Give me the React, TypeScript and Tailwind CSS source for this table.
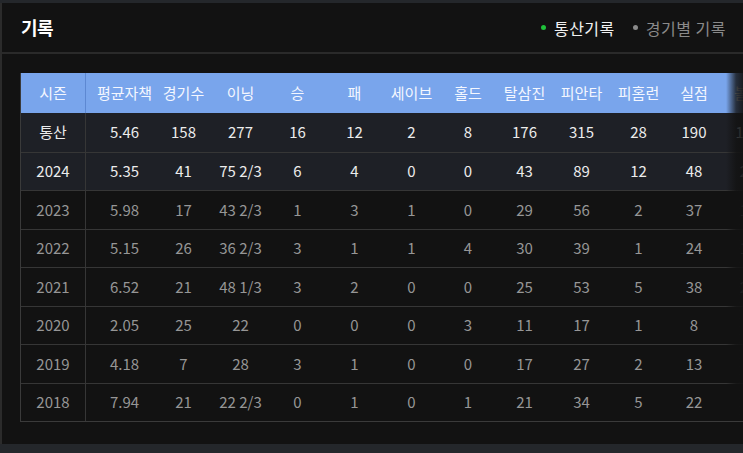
import React from 'react';

const columns = ['시즌', '평균자책', '경기수', '이닝', '승', '패', '세이브', '홀드', '탈삼진', '피안타', '피홈런', '실점', '볼넷'];

const colWidths = ['w-[65px]', 'w-[69px] pl-2', 'w-[57px]', 'w-[57px]', 'w-[57px]', 'w-[57px]', 'w-[57px]', 'w-[56px]', 'w-[57px]', 'w-[57px]', 'w-[57px]', 'w-[54px]', 'w-[54px]'];

const rows: { highlight: boolean; cells: string[] }[] = [
  { highlight: true, cells: ['통산', '5.46', '158', '277', '16', '12', '2', '8', '176', '315', '28', '190', '101'] },
  { highlight: true, cells: ['2024', '5.35', '41', '75 2/3', '6', '4', '0', '0', '43', '89', '12', '48', '25'] },
  { highlight: false, cells: ['2023', '5.98', '17', '43 2/3', '1', '3', '1', '0', '29', '56', '2', '37', '18'] },
  { highlight: false, cells: ['2022', '5.15', '26', '36 2/3', '3', '1', '1', '4', '30', '39', '1', '24', '16'] },
  { highlight: false, cells: ['2021', '6.52', '21', '48 1/3', '3', '2', '0', '0', '25', '53', '5', '38', '20'] },
  { highlight: false, cells: ['2020', '2.05', '25', '22', '0', '0', '0', '3', '11', '17', '1', '8', '7'] },
  { highlight: false, cells: ['2019', '4.18', '7', '28', '3', '1', '0', '0', '17', '27', '2', '13', '6'] },
  { highlight: false, cells: ['2018', '7.94', '21', '22 2/3', '0', '1', '0', '1', '21', '34', '5', '22', '9'] },
];

export default function App() {
  return (
    <div
      className="w-[743px] h-[453px] overflow-hidden bg-[#24272b] pt-[3px]"
      style={{ fontFamily: '"Noto Sans CJK KR", "Noto Sans", sans-serif' }}
    >
      <div className="w-[746px] h-[441px] bg-[#121212] border-l-2 border-[#2b2b2b] flex flex-col">
        {/* header */}
        <div className="h-[51px] shrink-0 flex items-center justify-between pl-[19px] pr-[20px] border-b-2 border-[#2a2a2a]">
          <h2 className="text-[18px] font-bold text-white tracking-tight">기록</h2>
          <div className="flex items-center gap-[18px] text-[16px] tracking-[0.5px]">
            <div className="flex items-center gap-[8px] text-[#f2f2f2]">
              <span className="w-[5px] h-[5px] rounded-full bg-[#1fc13a]" />
              <span>통산기록</span>
            </div>
            <div className="flex items-center gap-[8px] text-[#8a8a8a]">
              <span className="w-[5px] h-[5px] rounded-full bg-[#8a8a8a]" />
              <span>경기별 기록</span>
            </div>
          </div>
        </div>

        {/* table */}
        <div className="relative mt-[19px] ml-[18px] overflow-hidden">
          <div className="w-max border-l border-b border-[#3a3a3a] text-[15px]">
            <div className="flex h-[40px] bg-[#79a5ec] text-[#f4f7ff]">
              {columns.map((c, i) => (
                <div
                  key={c}
                  className={`${colWidths[i]} shrink-0 flex items-center justify-center whitespace-nowrap ${i === 0 ? 'border-r border-[#5d88d2]' : ''}`}
                >
                  {c}
                </div>
              ))}
            </div>
            {rows.map((r, ri) => (
              <div
                key={r.cells[0]}
                className={`flex h-[38.5px] ${ri > 0 ? 'border-t border-[#363636]' : ''} ${
                  r.highlight ? 'bg-[#1e2026] text-[#ececec]' : 'bg-[#121212] text-[#969696]'
                }`}
              >
                {r.cells.map((v, i) => (
                  <div
                    key={i}
                    className={`${colWidths[i]} shrink-0 flex items-center justify-center whitespace-nowrap ${i === 0 ? 'border-r border-[#363636]' : ''}`}
                  >
                    {v}
                  </div>
                ))}
              </div>
            ))}
          </div>
          <div className="absolute top-0 right-0 w-[20px] h-[348px] bg-gradient-to-r from-transparent via-[#121212]/80 to-[#121212]" />
        </div>
      </div>
    </div>
  );
}
